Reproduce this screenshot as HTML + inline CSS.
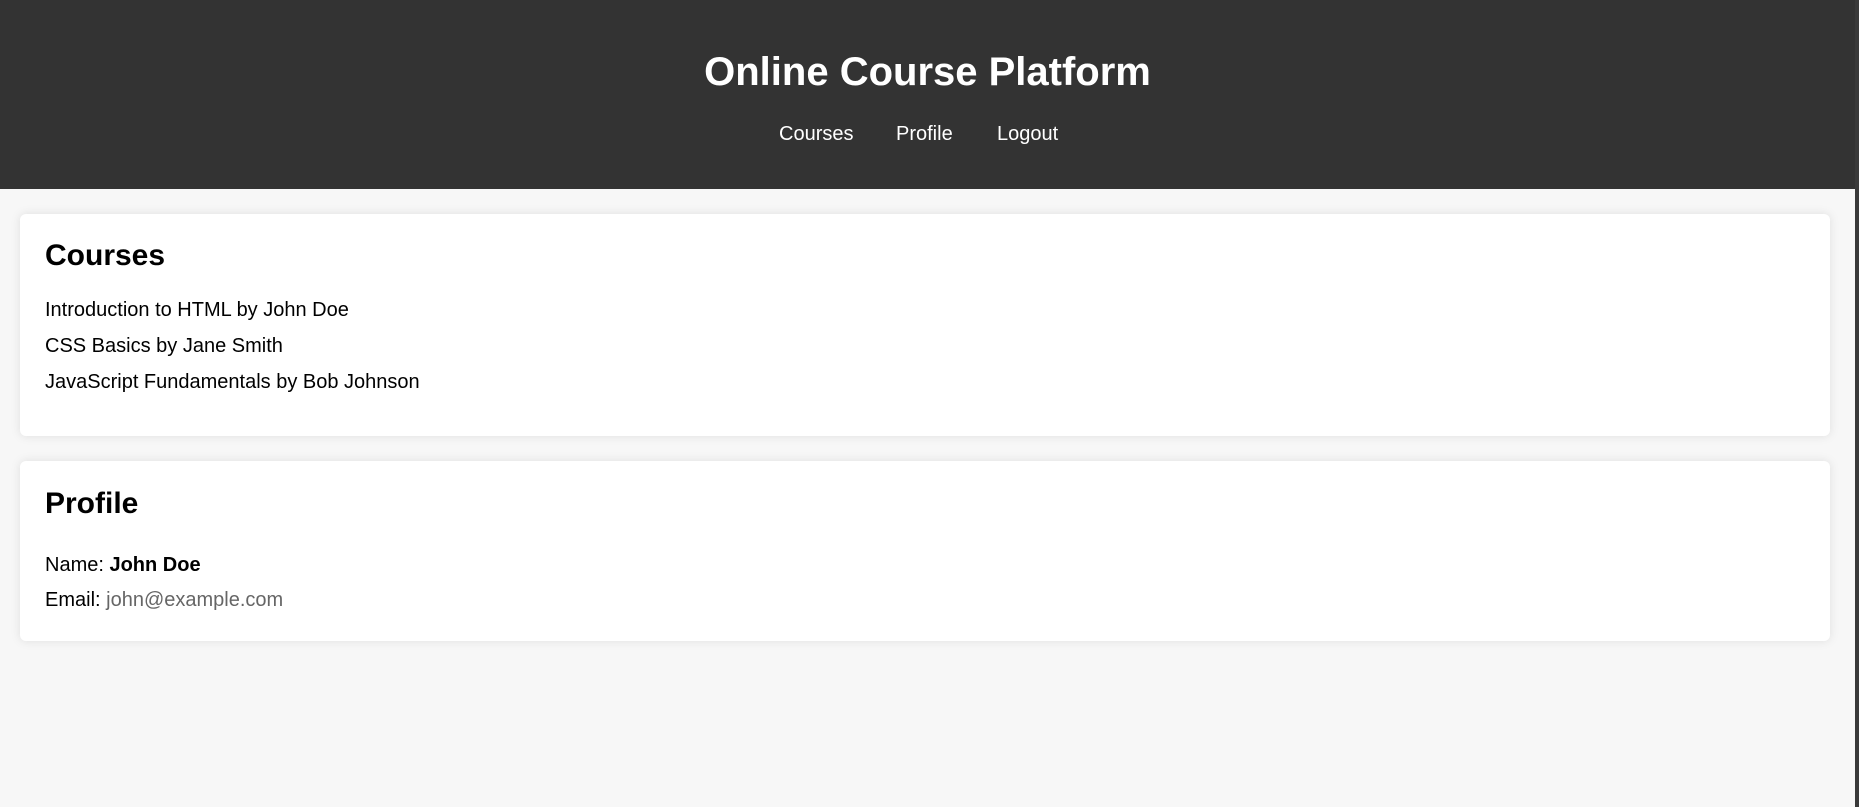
<!DOCTYPE html>
<html><head><meta charset="utf-8"><style>
*{margin:0;padding:0;box-sizing:border-box}
body{width:1859px;height:807px;background:#f7f7f7;font-family:"Liberation Sans",Arial,sans-serif;position:relative;overflow:hidden;color:#000}
.hdr{position:absolute;left:0;top:0;width:1855px;height:189px;background:#333}
.sb{position:absolute;right:0;top:0;width:4px;height:807px;background:#3a3a3a}
.a{position:absolute;line-height:1;white-space:nowrap}
.card{position:absolute;left:20px;width:1810px;background:#fff;border-radius:6px;box-shadow:0 0 10px rgba(0,0,0,0.1)}
</style></head><body>
<div class="hdr"></div>
<div class="sb"></div>
<div class="a" style="left:0;width:1855px;text-align:center;top:51.7px;font-size:40px;font-weight:bold;color:#fff">Online Course Platform</div>
<div class="a" style="left:779px;top:123.8px;font-size:20px;color:#fff">Courses</div>
<div class="a" style="left:896px;top:123.8px;font-size:20px;color:#fff">Profile</div>
<div class="a" style="left:997px;top:123.8px;font-size:20px;color:#fff">Logout</div>
<div class="card" style="top:214px;height:222px"></div>
<div class="card" style="top:461px;height:180px"></div>
<div class="a" style="left:45px;top:241px;font-size:30px;font-weight:bold">Courses</div>
<div class="a" style="left:45px;top:299.6px;font-size:20px">Introduction to HTML by John Doe</div>
<div class="a" style="left:45px;top:335.6px;font-size:20px">CSS Basics by Jane Smith</div>
<div class="a" style="left:45px;top:371.6px;font-size:20px">JavaScript Fundamentals by Bob Johnson</div>
<div class="a" style="left:45px;top:488.9px;font-size:30px;font-weight:bold">Profile</div>
<div class="a" style="left:45px;top:555.4px;font-size:20px">Name: <b>John Doe</b></div>
<div class="a" style="left:45px;top:590.4px;font-size:20px">Email: <span style="color:#666">john@example.com</span></div>
</body></html>
